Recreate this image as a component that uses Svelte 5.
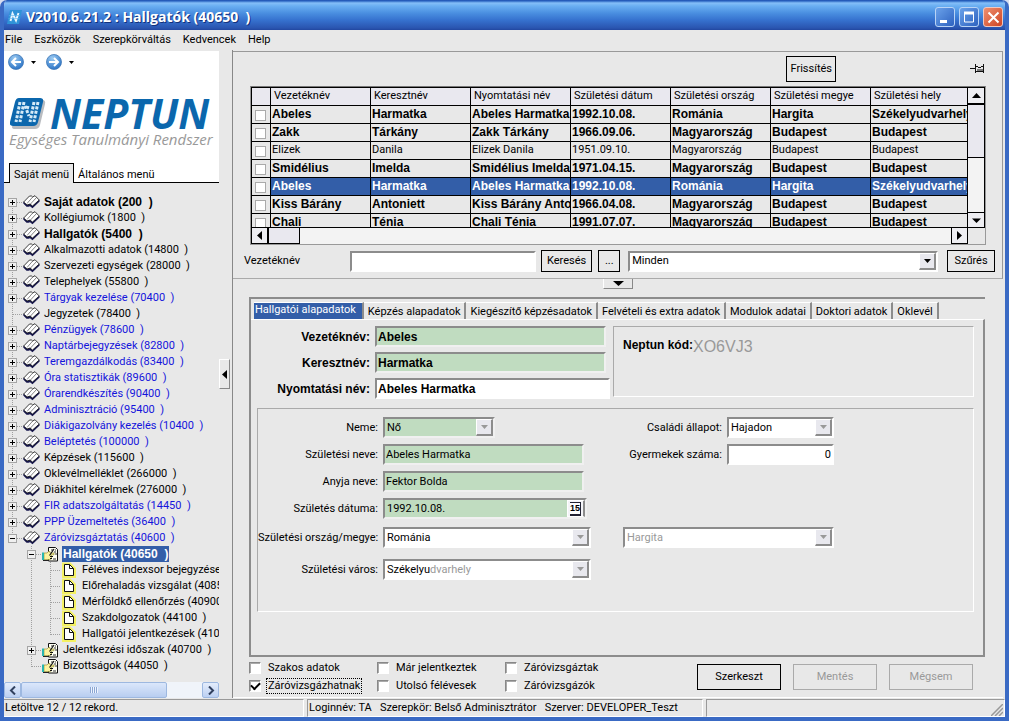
<script lang="ts">
  type Node = { guides: string[]; icon: 'book' | 'form' | 'page'; text: string; look?: string };

  const menus = ['File', 'Eszközök', 'Szerepkörváltás', 'Kedvencek', 'Help'];

  const roots: [string, string?][] = [
    ['Saját adatok (200\u00a0\u00a0)', 'bold'],
    ['Kollégiumok (1800\u00a0\u00a0)'],
    ['Hallgatók (5400\u00a0\u00a0)', 'bold'],
    ['Alkalmazotti adatok (14800\u00a0\u00a0)'],
    ['Szervezeti egységek (28000\u00a0\u00a0)'],
    ['Telephelyek (55800\u00a0\u00a0)'],
    ['Tárgyak kezelése (70400\u00a0\u00a0)', 'blue'],
    ['Jegyzetek (78400\u00a0\u00a0)', 'leaf'],
    ['Pénzügyek (78600\u00a0\u00a0)', 'blue'],
    ['Naptárbejegyzések (82800\u00a0\u00a0)', 'blue'],
    ['Teremgazdálkodás (83400\u00a0\u00a0)', 'blue'],
    ['Óra statisztikák (89600\u00a0\u00a0)', 'blue'],
    ['Órarendkészítés (90400\u00a0\u00a0)', 'blue'],
    ['Adminisztráció (95400\u00a0\u00a0)', 'blue'],
    ['Diákigazolvány kezelés (10400\u00a0\u00a0)', 'blue'],
    ['Beléptetés (100000\u00a0\u00a0)', 'blue'],
    ['Képzések (115600\u00a0\u00a0)'],
    ['Oklevélmelléklet (266000\u00a0\u00a0)'],
    ['Diákhitel kérelmek (276000\u00a0\u00a0)'],
    ['FIR adatszolgáltatás (14450\u00a0\u00a0)', 'blue'],
    ['PPP Üzemeltetés (36400\u00a0\u00a0)', 'blue'],
  ];

  const tree: Node[] = [
    ...roots.map(([text, look], i): Node => ({
      guides: [look === 'leaf' ? 'tee' : i === 0 ? 'plus first' : 'plus'],
      icon: 'book', text, look,
    })),
    { guides: ['minus last'], icon: 'book', text: 'Záróvizsgáztatás (40600\u00a0\u00a0)', look: 'blue' },
    { guides: ['blank', 'minus'], icon: 'form', text: 'Hallgatók (40650\u00a0\u00a0)', look: 'bold current' },
    { guides: ['blank', 'line', 'tee'], icon: 'page', text: 'Féléves indexsor bejegyzések' },
    { guides: ['blank', 'line', 'tee'], icon: 'page', text: 'Előrehaladás vizsgálat (40850\u00a0\u00a0)' },
    { guides: ['blank', 'line', 'tee'], icon: 'page', text: 'Mérföldkő ellenőrzés (40900\u00a0\u00a0)' },
    { guides: ['blank', 'line', 'tee'], icon: 'page', text: 'Szakdolgozatok (44100\u00a0\u00a0)' },
    { guides: ['blank', 'line', 'tee last'], icon: 'page', text: 'Hallgatói jelentkezések (41000\u00a0\u00a0)' },
    { guides: ['blank', 'plus'], icon: 'form', text: 'Jelentkezési időszak (40700\u00a0\u00a0)' },
    { guides: ['blank', 'tee last'], icon: 'form', text: 'Bizottságok (44050\u00a0\u00a0)' },
  ];

  const columns = ['Vezetéknév', 'Keresztnév', 'Nyomtatási név', 'Születési dátum', 'Születési ország', 'Születési megye', 'Születési hely'];
  const rows = [
    ['Abeles', 'Harmatka', 'Abeles Harmatka', '1992.10.08.', 'Románia', 'Hargita', 'Székelyudvarhely'],
    ['Zakk', 'Tárkány', 'Zakk Tárkány', '1966.09.06.', 'Magyarország', 'Budapest', 'Budapest'],
    ['Elizek', 'Danila', 'Elizek Danila', '1951.09.10.', 'Magyarország', 'Budapest', 'Budapest'],
    ['Smidélius', 'Imelda', 'Smidélius Imelda', '1971.04.15.', 'Magyarország', 'Budapest', 'Budapest'],
    ['Abeles', 'Harmatka', 'Abeles Harmatka', '1992.10.08.', 'Románia', 'Hargita', 'Székelyudvarhely'],
    ['Kiss Bárány', 'Antoniett', 'Kiss Bárány Anto', '1966.04.08.', 'Magyarország', 'Budapest', 'Budapest'],
    ['Chali', 'Ténia', 'Chali Ténia', '1991.07.07.', 'Magyarország', 'Budapest', 'Budapest'],
  ];
  const selectedRow = 4;

  const tabs = ['Hallgatói alapadatok', 'Képzés alapadatok', 'Kiegészítő képzésadatok', 'Felvételi és extra adatok', 'Modulok adatai', 'Doktori adatok', 'Oklevél'];

  const filters = [
    { text: 'Szakos adatok', on: false },
    { text: 'Már jelentkeztek', on: false },
    { text: 'Záróvizsgáztak', on: false },
    { text: 'Záróvizsgázhatnak', on: true },
    { text: 'Utolsó félévesek', on: false },
    { text: 'Záróvizsgázók', on: false },
  ];
</script>

{#snippet triangle(dir: string)}
  <svg class="tri" width="9" height="9" viewBox="0 0 9 9" aria-hidden="true">
    {#if dir === 'up'}<path d="M4.500 2L9 7H0z" />
    {:else if dir === 'left'}<path d="M2 4.500L7 0V9z" />
    {:else if dir === 'right'}<path d="M7 4.500L2 0V9z" />
    {:else}<path d="M0 2.500h9L4.500 7z" />{/if}
  </svg>
{/snippet}

{#snippet drop()}
  <span class="drop" aria-hidden="true"><svg width="7" height="4" viewBox="0 0 7 4"><path d="M0 0h7L3.500 4z" fill="currentColor" /></svg></span>
{/snippet}

{#snippet guide(kind: string)}
  <svg class="guide" width="19" height="16" viewBox="0 0 19 16" aria-hidden="true" shape-rendering="crispEdges">
    {#if kind !== 'blank'}
      <path d="M8.500 {kind.includes('first') ? 8 : 0}V{kind.includes('last') ? 9 : 16}{kind === 'line' ? '' : 'M9 8.5H19'}" stroke="#a0a0a0" stroke-dasharray="1 1" />
    {/if}
    {#if kind.startsWith('plus') || kind.startsWith('minus')}
      <rect x="4.500" y="4.500" width="8" height="8" fill="#f0f0f0" stroke="#a5a5a5" />
      <path d="M6 8.500h5{kind.startsWith('plus') ? 'M8.500 6v5' : ''}" stroke="#000" />
    {/if}
  </svg>
{/snippet}

{#snippet nodeIcon(kind: string)}
  {#if kind === 'book'}
    <svg class="icon" width="17" height="14" viewBox="0 0 17 14" aria-hidden="true">
      <path d="M.300 7V8.500L3.500 11.800H5.500L7 11.300L9.500 13.300L16.600 6.500V5z" fill="#16164e" />
      <path d="M.700 7L6.500 1H8.500L9.700 2L12 .700L16.200 5L9.500 11L7 9L4 10z" fill="#fff" stroke="#111" stroke-width=".8" />
      <path d="M9.700 2L4 8.500M7.500 9L13.500 2.500" fill="none" stroke="#333" stroke-width=".6" />
    </svg>
  {:else if kind === 'form'}
    <svg class="icon" width="17" height="16" viewBox="0 0 17 16" aria-hidden="true">
      <path d="M6.500 1.500h7l2 2v11.500h-9z" fill="#fffff4" stroke="#111" />
      <path d="M9 4h2M13 4h1M12 6h2M13 8h2M11 13h3" stroke="#333" fill="none" />
      <path d="M2 7h3l1.500-1.500h1.500L8 7h4v1.800H9.500v4L8 13.500H2z" fill="#fbf3a0" stroke="#8a8420" stroke-width=".6" />
      <path d="M12 3L7.500 9.500M8 10.500h3M8 12.500h2" stroke="#111" stroke-width="1.200" fill="none" />
      <path d="M0 6.500h2V14H0z" fill="#27b5b0" />
      <path d="M1 14.500h6" stroke="#222" />
    </svg>
  {:else}
    <svg class="icon" width="17" height="16" viewBox="0 0 17 16" aria-hidden="true">
      <path d="M2 1.500h7l5 5v8.500H2z" fill="none" stroke="#f4f163" stroke-width="2" />
      <path d="M3.500 2.500h5l4 4v7h-9z" fill="#fff" stroke="#111" />
      <path d="M8.500 2.500v4h4" fill="none" stroke="#111" />
    </svg>
  {/if}
{/snippet}

<div class="window">
  <header class="title">
    <svg width="15" height="14" viewBox="0 0 15 14" aria-hidden="true">
      <path d="M3 0h12l-3 14H0z" fill="#2f93d8" />
      <path d="M3.500 11L5.500 3.500L9 10.500L11.500 3" fill="none" stroke="#e4f5ff" stroke-width="2" />
      <path d="M2 5.500h11M1.500 8.500h11" stroke="#5db1e6" stroke-width=".6" />
    </svg>
    <h1>V2010.6.21.2 : Hallgatók (40650&nbsp;&nbsp;)</h1>
    <div class="caption">
      <button aria-label="Kis méret"><svg width="19" height="19" viewBox="0 0 19 19"><path d="M4 13.500h7" stroke="#fff" stroke-width="3" /></svg></button>
      <button aria-label="Teljes méret"><svg width="19" height="19" viewBox="0 0 19 19"><path d="M4.500 5v9h9V5z" fill="none" stroke="#fff" /><path d="M4 5h10" stroke="#fff" stroke-width="3" /></svg></button>
      <button class="close" aria-label="Bezárás"><svg width="19" height="19" viewBox="0 0 19 19"><path d="M4.500 4.500l10 10M14.500 4.500l-10 10" stroke="#fff" stroke-width="2" /></svg></button>
    </div>
  </header>

  <nav class="menu">
    {#each menus as m}<button>{m}</button>{/each}
  </nav>

  <div class="body">
    <aside>
      <div class="brand">
        <div class="history">
          {#each ['Vissza', 'Előre'] as label, i}
            <button aria-label={label}>
              <svg width="16" height="16" viewBox="0 0 16 16">
                <defs><radialGradient id="ball{i}" cx=".4" cy=".25" r=".8"><stop offset="0" stop-color="#9ccbf2" /><stop offset="1" stop-color="#256fc4" /></radialGradient></defs>
                <circle cx="8" cy="8" r="7.500" fill="url(#ball{i})" stroke="#4079b8" stroke-width=".8" />
                <path d={i ? 'M3 8h9M8 4l4 4l-4 4' : 'M13 8H4M8 4L4 8l4 4'} fill="none" stroke="#fff" stroke-width="2" />
              </svg>
            </button>
            <button class="more" aria-label="{label} lista"><svg width="5" height="3" viewBox="0 0 5 3"><path d="M0 0h5L2.500 3z" /></svg></button>
          {/each}
        </div>
        <div class="logo">
          <svg width="38" height="33" viewBox="0 0 38 33" aria-hidden="true">
            <path d="M9 3h23q4 0 3 4l-5 21q-1 4-5 4H5q-3 0-3-2z" fill="#b9bcc0" />
            <path d="M9 1h21q4 0 3 4l-5 20q-1 4-5 4H3q-4 0-3-4L5 5q1-4 4-4z" fill="#0b67ad" />
            <g stroke="#d5ebf8" stroke-width="3" stroke-dasharray="3 1.500" fill="none">
              <path d="M10 5L6 25M14 5L10 25M24 5l-4 20M28 5l-4 20" />
            </g>
            <path d="M15 9L19 19M18 9L17 13" stroke="#d5ebf8" stroke-width="3" stroke-dasharray="3 1.500" fill="none" />
          </svg>
          <strong>NEPTUN</strong>
        </div>
        <p>Egységes Tanulmányi Rendszer</p>
        <div class="side-tabs" role="tablist">
          <button role="tab" aria-selected="true" class="active">Saját menü</button>
          <button role="tab" aria-selected="false">Általános menü</button>
        </div>
      </div>
      <ul class="tree">
        {#each tree as n}
          <li class={n.look}>
            {#each n.guides as g}{@render guide(g)}{/each}
            {@render nodeIcon(n.icon)}
            <a href="#node">{n.text}</a>
          </li>
        {/each}
      </ul>
      <div class="hbar">
        <button aria-label="Balra"><svg width="8" height="9" viewBox="0 0 8 9"><path d="M6 .5l-4 4l4 4" /></svg></button>
        <span class="thumb"><i></i></span>
        <button aria-label="Jobbra"><svg width="8" height="9" viewBox="0 0 8 9"><path d="M2 .5l4 4l-4 4" /></svg></button>
      </div>
    </aside>

    <div class="splitter"><button aria-label="Menü elrejtése">{@render triangle('left')}</button></div>

    <main>
      <section class="list">
        <div class="tools">
          <button class="flat refresh">Frissítés</button>
          <button class="pin" aria-label="Rögzítés">
            <svg width="15" height="12" viewBox="0 0 15 12" shape-rendering="crispEdges"><path d="M0 5.500h5M5.500 1v9M6 3.500h2M8 4.500h3M11 3.500h2M6 8.500h7" fill="none" stroke="#111" /><path d="M7 6h6v2H7z" fill="#777" /><path d="M13.500 1v9" stroke="#111" /></svg>
          </button>
        </div>

        <div class="grid">
          <div class="grid-top">
            <div class="clip">
              <table>
                <thead>
                  <tr><th class="pick"></th>{#each columns as c}<th>{c}</th>{/each}</tr>
                </thead>
                <tbody>
                  {#each rows as r, i}
                    <tr class:thin={i === 2} class:selected={i === selectedRow}>
                      <td class="pick"><input type="checkbox" aria-label="{r[2]} kijelölése" /></td>
                      {#each r as c}<td>{c}</td>{/each}
                    </tr>
                  {/each}
                </tbody>
              </table>
            </div>
            <div class="vscroll">
              <button aria-label="Fel">{@render triangle('up')}</button>
              <span></span>
              <button class="end" aria-label="Le">{@render triangle('down')}</button>
            </div>
          </div>
          <div class="hscroll">
            <button aria-label="Balra">{@render triangle('left')}</button>
            <span></span>
            <button class="end" aria-label="Jobbra">{@render triangle('right')}</button>
            <em></em>
          </div>
        </div>

        <form class="search">
          <label for="q">Vezetéknév</label>
          <input id="q" class="sunk" />
          <button type="button" class="flat">Keresés</button>
          <button type="button" class="flat dots">...</button>
          <div class="combo dark"><select aria-label="Szűrő"><option>Minden</option></select>{@render drop()}</div>
          <button type="button" class="flat filter">Szűrés</button>
        </form>
      </section>

      <div class="fold"><button aria-label="Lista elrejtése"><svg width="11" height="5" viewBox="0 0 11 5"><path d="M0 0h11L5.500 5z" /></svg></button></div>

      <section class="details">
        <div class="tabs" role="tablist">
          {#each tabs as t, i}<button role="tab" aria-selected={i === 0} class:active={i === 0}>{t}</button>{/each}
        </div>
        <div class="sheet">
          <div class="names">
            <div class="fields">
              <label for="vn">Vezetéknév:</label><input id="vn" class="sunk green" value="Abeles" />
              <label for="kn">Keresztnév:</label><input id="kn" class="sunk green" value="Harmatka" />
              <label for="nn">Nyomtatási név:</label><input id="nn" class="sunk wide" value="Abeles Harmatka" />
            </div>
            <div class="code"><strong>Neptun kód:</strong><span>XO6VJ3</span></div>
          </div>

          <div class="personal">
            <div class="pairs">
              <label for="neme">Neme:</label>
              <div class="combo green w-s"><select id="neme"><option>Nő</option></select>{@render drop()}</div>
              <label for="cs">Családi állapot:</label>
              <div class="combo"><select id="cs"><option>Hajadon</option></select>{@render drop()}</div>

              <label for="szn">Születési neve:</label>
              <input id="szn" class="sunk green w-m" value="Abeles Harmatka" />
              <label for="gy">Gyermekek száma:</label>
              <input id="gy" class="sunk num" value="0" />

              <label for="an">Anyja neve:</label>
              <input id="an" class="sunk green w-m" value="Fektor Bolda" />

              <label class="first-col" for="szd">Születés dátuma:</label>
              <div class="combo green date">
                <input id="szd" value="1992.10.08." />
                <button type="button" class="cal" aria-label="Naptár"><span>15</span></button>
              </div>
            </div>
            <div class="pairs places">
              <label for="orsz">Születési ország/megye:</label>
              <div class="combo"><select id="orsz"><option>Románia</option></select>{@render drop()}</div>
              <div class="combo county"><select aria-label="Megye" disabled><option>Hargita</option></select>{@render drop()}</div>

              <label class="first-col" for="varos">Születési város:</label>
              <div class="combo"><button type="button" id="varos" class="typed">Székelyu<span>dvarhely</span></button>{@render drop()}</div>
            </div>
          </div>
        </div>
      </section>

      <div class="actions">
        <div class="checks">
          {#each filters as f}
            <label class:focus={f.on}><input type="checkbox" checked={f.on} /><span>{f.text}</span></label>
          {/each}
        </div>
        <div class="buttons">
          <button class="flat">Szerkeszt</button>
          <button class="flat" disabled>Mentés</button>
          <button class="flat" disabled>Mégsem</button>
        </div>
      </div>
    </main>
  </div>

  <footer>
    <span>Letöltve 12 / 12 rekord.</span>
    <span>Loginnév: TA&nbsp;&nbsp; Szerepkör: Belső Adminisztrátor&nbsp;&nbsp; Szerver: DEVELOPER_Teszt</span>
    <span class="rest"><svg width="12" height="12" viewBox="0 0 12 12" aria-hidden="true"><path d="M0 12L12 0M4 12l8-8M8 12l4-4" stroke="#999" stroke-width="1.500" /></svg></span>
  </footer>
</div>

<style>
  :global(body) { margin: 0; background: #d8def0; }
  * { box-sizing: border-box; }
  .window {
    display: flex; flex-direction: column; min-height: 100vh;
    font: 11px/14px Roboto, "Liberation Sans", Arial, sans-serif; color: #000;
    background: #e8e8e8; border: 4px solid #3a6ac4; border-top: 0;
    border-radius: 7px 7px 0 0; overflow: hidden;
  }
  button, input, select { font: inherit; color: inherit; margin: 0; padding: 0; border: 0; border-radius: 0; background: none; }
  button { white-space: nowrap; }
  svg { display: block; flex: none; }

  .title {
    display: flex; align-items: center; gap: 4px; height: 30px; margin: 0 -4px; padding: 3px 6px 0 7px;
    background: linear-gradient(#1d4fae 0, #2d68c4 1px, #84bff8 3px, #6aaff2 6px, #4a8fe0 13px, #3672cf 20px, #2a55b0 28px, #2247a0 30px);
  }
  h1 { flex: 1; margin: 0; font: bold 14px/18px "Open Sans", sans-serif; color: #fff; text-shadow: 1px 1px #12317c; }
  .caption { display: flex; gap: 4px; }
  .caption button { border: 1px solid #b9d3f5; border-radius: 3px; width: 20px; height: 20px; background: linear-gradient(135deg, #6ba2ea, #2d62c0); }
  .caption .close { background: linear-gradient(135deg, #ee9070, #cf4424); border-color: #f0c8c0; }

  .menu { display: flex; gap: 12px; height: 20px; padding: 0 2px 0 1px; }

  .body { flex: 1; display: flex; }
  aside { width: 215px; flex: none; display: flex; flex-direction: column; overflow: hidden; padding-top: 1px; }
  .brand { background: #fff; }
  .history { display: flex; align-items: center; height: 22px; padding-left: 4px; }
  .history button { display: flex; }
  .history .more { padding: 0 10px 0 7px; }
  .logo { display: flex; align-items: flex-start; gap: 2px; padding: 24px 0 0 6px; height: 57px; }
  .logo strong { font: italic bold 41px/32px "Open Sans", sans-serif; color: #0b67ad; }
  .brand p { margin: 0; padding-left: 5px; font: italic 15px/18px "Open Sans", sans-serif; color: #999; white-space: nowrap; }
  .side-tabs { display: flex; align-items: flex-end; margin-top: 15px; padding-left: 5px; box-shadow: inset 0 -1px #000; }
  .side-tabs button { height: 19px; padding: 2px 4px 0; }
  .side-tabs .active { border: 1px solid #000; border-bottom: 0; background: #e8e8e8; height: 20px; }

  .tree { flex: 1; list-style: none; margin: 0; padding: 11px 0 8px; }
  .tree li { display: flex; align-items: center; height: 16px; white-space: nowrap; }
  .tree a { color: #000; text-decoration: none; padding: 0 1px; margin-left: 3px; line-height: 16px; }
  .tree .blue a { color: #1414dc; }
  .tree .bold a { font: bold 12px/16px "Liberation Sans", Arial, sans-serif; }
  .tree .current a { background: #335ea8; color: #fff; }

  .hbar { display: flex; height: 16px; background: #f0f4fa; }
  .hbar button { width: 17px; display: flex; align-items: center; justify-content: center; border: 1px solid #9db8e0; border-radius: 2px; background: linear-gradient(#e4edfc, #bcd0f2); }
  .hbar button:last-child { margin-left: auto; }
  .hbar path { fill: none; stroke: #31415f; stroke-width: 2; }
  .thumb { flex: 0 0 68%; display: flex; align-items: center; justify-content: center; border: 1px solid #9db8e0; border-radius: 2px; background: linear-gradient(#dbe7fb, #b8cdf0); }
  .thumb i { width: 8px; height: 6px; background: repeating-linear-gradient(90deg, #8ba6d2 0 1px, #eef4ff 1px 2px); }

  .splitter { width: 13px; flex: none; display: flex; align-items: center; }
  .splitter button { width: 11px; height: 30px; display: flex; align-items: center; justify-content: center; border: 1px solid #fff; border-right-color: #888; border-bottom-color: #888; }

  main { flex: 1; min-width: 0; display: flex; flex-direction: column; padding: 1px 2px 0 0; border-left: 1px solid #888; }
  .list { border: 1px solid #999; border-left: 0; border-bottom-color: #aaa; padding: 4px 7px 6px 11px; }
  .tools { display: flex; justify-content: flex-end; align-items: center; gap: 134px; padding: 0 10px 0 0; }
  .flat { border: 1px solid #000; height: 22px; padding: 0 5px; min-width: 22px; }
  .refresh { height: 26px; padding: 0 3px; }
  .flat:disabled { border-color: #aaa; color: #999; }

  .grid { margin: 4px 9px 0 6px; border: 1px solid #999; border-top-color: #777; }
  .grid-top { display: flex; height: 141px; }
  .clip { flex: 1; min-width: 0; overflow: hidden; border: 1px solid #000; border-right: 0; }
  table { width: 100%; table-layout: fixed; border-spacing: 0; }
  th, td { height: 18px; padding: 0 0 2px 1px; text-align: left; white-space: nowrap; overflow: hidden; border-right: 1px solid #000; border-bottom: 1px solid #000; line-height: 14px; }
  th { width: 100px; font-weight: normal; padding: 0 0 1px 3px; background: #e9e8ef; }
  th:last-child { width: auto; }
  td { font: bold 12px/14px "Liberation Sans", Arial, sans-serif; }
  .thin td { font: 11px/14px Roboto, "Liberation Sans", Arial, sans-serif; }
  .selected td:not(.pick) { background: #335ea8; color: #fff; }
  .pick { width: 19px; padding-left: 3px; }
  .pick input { display: block; appearance: none; width: 11px; height: 11px; margin-top: 3px; background: #fff; border: 1px solid #aaa; }
  .vscroll { width: 17px; display: flex; flex-direction: column; border-top: 1px solid #000; border-right: 1px solid #000; background: #f3f3f3; }
  .vscroll button, .hscroll button { display: flex; align-items: center; justify-content: center; flex: none; background: #eeeef2; width: 16px; height: 16px; }
  .vscroll button { border-bottom: 1px solid #000; }
  .vscroll span { height: 54px; background: #e9e8ef; border: 1px solid #000; border-width: 1px 0; }
  .vscroll .end { margin-top: auto; border-top: 1px solid #000; }
  .hscroll { display: flex; height: 16px; background: #f3f3f3; }
  .hscroll button { border: 1px solid #000; border-top: 0; width: 17px; }
  .hscroll span { width: 32px; background: #e9e8ef; border: 1px solid #000; border-width: 0 1px 1px; }
  .hscroll .end { margin-left: auto; }
  .hscroll em { width: 17px; background: #e8e8e8; }

  .sunk, .combo { border: 2px solid; border-color: #8c8c8c #fff #fff #8c8c8c; background: #fff; height: 21px; min-width: 0; }
  .sunk { padding: 0 1px; }
  .sunk.green, .combo.green { background: #c0dcc0; border-color: #8c8c8c #f0f0f0 #f0f0f0 #8c8c8c; }
  .combo { display: flex; color: #999; }
  .combo select, .combo > input, .typed { flex: 1; min-width: 0; appearance: none; color: #000; padding-left: 2px; text-align: left; opacity: 1; }
  .combo select:disabled { color: #999; }
  .combo.dark { color: #000; }
  .drop { width: 17px; display: flex; align-items: center; justify-content: center; background: #e8e8ee; border: 1px solid #fff; border-right: 2px solid #8c8c8c; border-bottom: 2px solid #8c8c8c; }
  .typed span { color: #999; }

  .search { display: flex; align-items: center; margin: 5px 0 0; }
  .search label { width: 106px; }
  .search input { width: 186px; margin-right: 5px; }
  .search .flat { min-width: 50px; }
  .search .flat.dots { min-width: 22px; margin: 0 8px 0 6px; }
  .search .combo { flex: 1; margin-right: 9px; }
  .search .flat.filter { min-width: 48px; }

  .fold { display: flex; justify-content: center; }
  .fold button { width: 30px; height: 10px; display: flex; align-items: center; justify-content: center; border: 1px solid #fff; border-top: 0; border-right-color: #888; border-bottom-color: #888; }

  .details { flex: 1; display: flex; flex-direction: column; margin: 8px 18px 0 16px; border: 2px solid #8c8c8c; border-right: 0; padding: 3px 0 0; }
  .tabs { display: flex; padding-left: 3px; }
  .tabs button { height: 17px; padding: 1px 4px 0; border-right: 2px solid #8c8c8c; border-top: 1px solid #fff; }
  .tabs .active { background: #335ea8; color: #fff; padding: 0 6px 3px 1px; }
  .sheet { flex: 1; border-top: 1px solid #fff; border-right: 2px solid #8c8c8c; padding: 6px 9px 0 6px; }
  .names { display: flex; gap: 3px; }
  .fields { display: grid; grid-template-columns: 113px 235px; gap: 5px; align-items: center; font: bold 12px/14px "Liberation Sans", Arial, sans-serif; }
  label { white-space: nowrap; }
  .fields label, .pairs label { text-align: right; }
  .fields input { width: 231px; }
  .fields .wide { width: 100%; }
  .code { flex: 1; border: 1px solid #aaa; border-right-color: #fff; border-bottom-color: #fff; margin-bottom: 2px; padding: 11px 9px; display: flex; align-items: flex-start; font-family: "Liberation Sans", Arial, sans-serif; }
  .code strong { font-size: 12px; }
  .code span { font-size: 16px; line-height: 18px; color: #999; }
  .personal { margin-top: 9px; height: 204px; border: 1px solid #aaa; border-right-color: #fff; border-bottom-color: #fff; padding-top: 8px; }
  .pairs { display: grid; grid-template-columns: 120px 208px 126px 107px; gap: 6px 5px; align-items: center; }
  .places { margin-top: 8px; row-gap: 11px; }
  .first-col { grid-column: 1; }
  .w-s { width: 112px; }
  .w-m { width: 201px; }
  .date { width: 204px; }
  .num { text-align: right; }
  .county { grid-column: 3 / 5; margin-left: 27px; }
  .cal { width: 18px; padding: 1px 2px; background: #f4f4f8; border: 1px solid #fff; border-right: 2px solid #8c8c8c; color: #000; font: bold 9px/11px "Liberation Sans", Arial, sans-serif; }
  .cal span { display: block; border: solid #223; border-width: 1px 1px 2px 0; background: #fff; }

  .actions { display: flex; justify-content: space-between; align-items: flex-start; padding: 3px 30px 3px 16px; border-bottom: 1px solid #fff; }
  .checks { display: grid; grid-template-columns: 128px 128px auto; row-gap: 2px; }
  .checks label { display: flex; align-items: center; gap: 5px; }
  .checks span { padding: 0 1px; border: 1px solid transparent; }
  .checks .focus span { border: 1px dotted #000; }
  .checks input { appearance: none; width: 12px; height: 12px; background: #fff; border: 1px solid; border-color: #888 #fff #fff #888; box-shadow: inset 1px 1px #aaa; }
  .checks input:checked { display: grid; place-items: center; }
  .checks input:checked::before { content: ""; width: 7px; height: 4px; border: solid #000; border-width: 0 0 2px 2px; transform: translateY(-1px) rotate(-45deg); }
  .buttons { display: flex; gap: 12px; padding-top: 4px; }
  .buttons .flat { width: 84px; height: 26px; }

  footer { display: flex; gap: 3px; height: 19px; padding-top: 1px; }
  footer span { flex: 0 0 auto; border: 1px solid #999; border-right-color: #fff; border-bottom-color: #fff; padding: 1px 1px 0; white-space: nowrap; overflow: hidden; }
  footer span:nth-child(1) { width: 300px; border-left: 0; }
  footer span:nth-child(2) { width: 396px; }
  footer .rest { flex: 1; display: flex; justify-content: flex-end; align-items: flex-end; }
</style>
